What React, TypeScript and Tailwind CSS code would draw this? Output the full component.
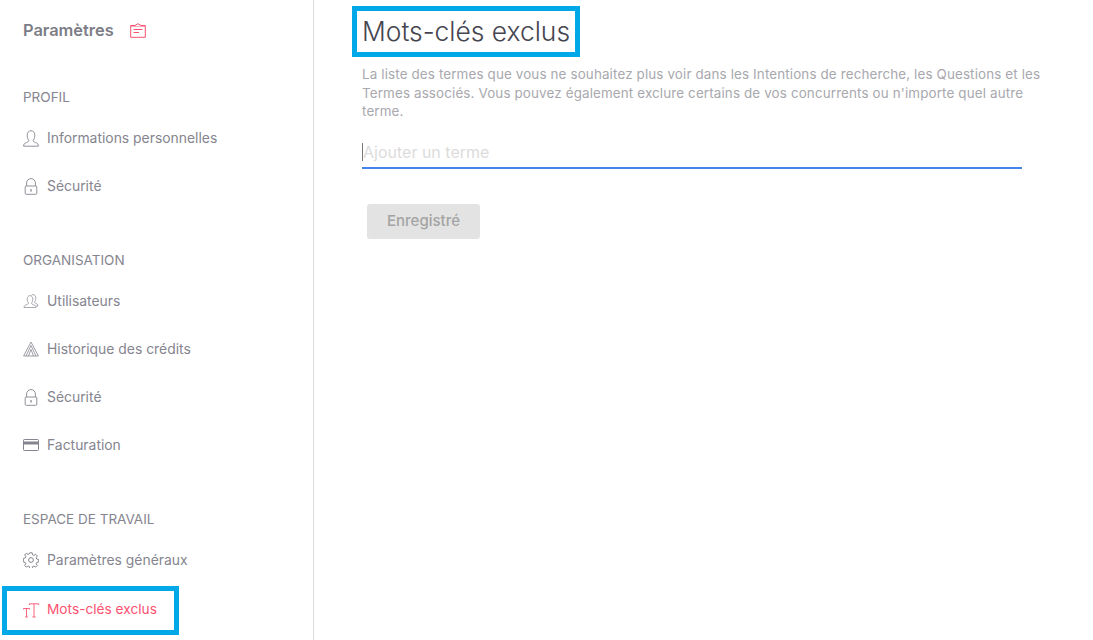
import type { ReactNode } from 'react';

const GREY = '#85858f';

function UserIcon() {
  return (
    <svg width="16" height="17" viewBox="0 0 16 17" fill="none" stroke="currentColor" strokeWidth="0.9">
      <path d="M0.6 16.2c0-2.2 1-3 2.8-3.6 1.5-.5 2.4-1 2.4-1.9 0-.6-.5-1-.9-1.8C4.4 8 4.2 6.9 4.2 5.2 4.2 2.4 5.800 0.700 8 0.700s3.800 1.700 3.800 4.500c0 1.700-.2 2.800-.7 3.700-.4.800-.9 1.200-.9 1.800 0 .9.900 1.400 2.400 1.900 1.800.6 2.800 1.400 2.800 3.600z" />
    </svg>
  );
}

function LockIcon() {
  return (
    <svg width="16" height="17" viewBox="0 0 16 17" fill="none" stroke="currentColor" strokeWidth="0.9">
      <path d="M3.600 8V5a4.400 4.400 0 0 1 8.800 0v3" />
      <rect x="2.200" y="8" width="11.600" height="8.300" rx="1" />
      <path d="M8 11.200v2.600M7.200 12h1.600" />
    </svg>
  );
}

function UsersIcon() {
  return (
    <svg width="16" height="15" viewBox="0 0 16 15" fill="none" stroke="currentColor" strokeWidth="0.7">
      <path d="M1 13.500c0-1.800 1-2.200 2.400-2.700 1.300-.5 2-1 2-1.600 0-.5-.4-.8-.7-1.500-.3-.7-.5-1.500-.5-2.700C4.200 3 5.400 1.600 7 1.600s2.800 1.400 2.800 3.400c0 1.200-.2 2-.5 2.700-.3.700-.7 1-.7 1.500 0 .6.700 1.100 2 1.600 1.400.5 2.400.9 2.400 2.700z" />
      <path d="M8.500 1.200C9 .8 9.500.6 10 .6c1.600 0 2.800 1.400 2.800 3.400 0 1.200-.2 2-.5 2.700-.3.700-.7 1-.7 1.500 0 .6.700 1 1.500 1.300 1 .4 1.900.9 1.900 2.500h-2" />
    </svg>
  );
}

function PeaksIcon() {
  return (
    <svg width="16" height="16" viewBox="0 0 16 16" fill="none" stroke="currentColor" strokeWidth="0.8">
      <path d="M8 1 0.600 15h14.800z" />
      <path d="M8 4.500 3 15M8 4.500 13 15M8 8.500 5.500 15M8 8.500l2.500 6.500" />
    </svg>
  );
}

function CardIcon() {
  return (
    <svg width="16" height="12" viewBox="0 0 16 12" fill="none">
      <rect x="0.500" y="0.500" width="15" height="11" rx="0.800" stroke="currentColor" />
      <rect x="0.500" y="2.500" width="15" height="3" fill="currentColor" />
    </svg>
  );
}

function GearIcon() {
  return (
    <svg width="16" height="16" viewBox="0 0 16 16" fill="none" stroke="currentColor" strokeWidth="1">
      <circle cx="8" cy="8" r="2.400" />
      <path d="M6.800.8h2.400l.4 2 1.300.6 1.800-1.100 1.600 1.700-1.100 1.700.5 1.300 2 .5v2.400l-2 .5-.5 1.300 1.100 1.700-1.600 1.700-1.800-1.100-1.300.6-.4 2H6.800l-.4-2-1.300-.6-1.800 1.100-1.600-1.700 1.100-1.700-.5-1.300-2-.5V6.500l2-.5.5-1.300-1.100-1.700 1.600-1.700 1.800 1.100 1.300-.6z" />
    </svg>
  );
}

function TextSizeIcon() {
  return (
    <svg width="16" height="15" viewBox="0 0 16 15" fill="none" stroke="currentColor" strokeWidth="0.9">
      <path d="M0.500 6.500V5.500h6v1M3.500 5.500v8.500M2.200 14h2.600" />
      <path d="M6.500 2V.8h9V2M11 .8V14M9.400 14h3.200" />
    </svg>
  );
}

function ClipboardIcon() {
  return (
    <svg width="16" height="15" viewBox="0 0 16 15" fill="none" stroke="#fb5270" strokeWidth="1">
      <path d="M.7 2.500h4.300L8 .7l3 1.800h4.300v11.800H.7z" strokeLinejoin="round" />
      <path d="M.7 3.500h14.600" strokeOpacity="0.5" />
      <path d="M3.500 6.500h9M3.500 9.500h5.500" />
    </svg>
  );
}

function NavItem({ icon, label }: { icon: ReactNode; label: string }) {
  return (
    <div className="flex h-12 items-center gap-2 text-[13.900px] text-[#85858f]">
      <span className="flex w-4 shrink-0 justify-center">{icon}</span>
      <span>{label}</span>
    </div>
  );
}

function SectionTitle({ children }: { children: ReactNode }) {
  return <div className="text-[13.500px] leading-5 text-[#85858f]">{children}</div>;
}

export default function App() {
  return (
    <div
      className="flex h-[640px] w-[1093px] overflow-hidden bg-white"
      style={{ fontFamily: 'Inter, "Noto Sans", sans-serif', color: GREY }}
    >
      {/* Sidebar */}
      <aside className="flex w-[314px] shrink-0 flex-col border-r border-[#dcdcdc] pl-[23px]">
        <div className="mt-[20px] flex h-5 items-center gap-[16px]">
          <span className="text-[16.400px] font-semibold text-[#7d7d88]">Paramètres</span>
          <span><ClipboardIcon /></span>
        </div>

        <div className="mt-[47px]">
          <SectionTitle>PROFIL</SectionTitle>
        </div>
        <div className="mt-[7px]">
          <NavItem icon={<UserIcon />} label="Informations personnelles" />
          <NavItem icon={<LockIcon />} label="Sécurité" />
        </div>

        <div className="mt-[40px]">
          <SectionTitle>ORGANISATION</SectionTitle>
        </div>
        <div className="mt-[7px]">
          <NavItem icon={<UsersIcon />} label="Utilisateurs" />
          <NavItem icon={<PeaksIcon />} label="Historique des crédits" />
          <NavItem icon={<LockIcon />} label="Sécurité" />
          <NavItem icon={<CardIcon />} label="Facturation" />
        </div>

        <div className="mt-[40px]">
          <SectionTitle>ESPACE DE TRAVAIL</SectionTitle>
        </div>
        <div className="mt-[7px]">
          <NavItem icon={<GearIcon />} label="Paramètres généraux" />
        </div>
        <div className="-ml-[21px] mt-[2px] flex h-[49px] w-[177px] items-center gap-2 border-[5px] border-[#00a8e8] pl-[16px] text-[13.700px] text-[#fb5270]">
          <span className="flex w-4 shrink-0 justify-center"><TextSizeIcon /></span>
          <span className="-mt-[3px]">Mots-clés exclus</span>
        </div>
      </aside>

      {/* Main content */}
      <main className="flex flex-col pl-[48px]">
        <h1 className="-ml-[10px] mt-[6px] flex h-[51px] w-[228px] items-center border-[5px] border-[#00a8e8] pl-[5px] text-[26.400px] font-light text-[#45454f]">
          Mots-clés exclus
        </h1>
        <p className="mt-[8px] w-[690px] text-[13.400px] leading-[18.500px] tracking-[0.14px] text-[#a8a8ae]">
          La liste des termes que vous ne souhaitez plus voir dans les Intentions de recherche, les Questions et les
          Termes associés. Vous pouvez également exclure certains de vos concurrents ou n'importe quel autre terme.
        </p>
        <div className="mt-[17px] flex h-[31px] w-[660px] items-center border-b-2 border-[#4582ec]">
          <span className="h-[18px] w-px bg-[#777]" />
          <span className="text-[16px] text-[#dcdcdc]">Ajouter un terme</span>
        </div>
        <button className="ml-[5px] mt-[35px] flex h-[35px] w-[113px] items-center justify-center rounded-[3px] bg-[#e3e3e3] text-[15px] font-medium text-[#a3a3a3]">
          Enregistré
        </button>
      </main>
    </div>
  );
}
